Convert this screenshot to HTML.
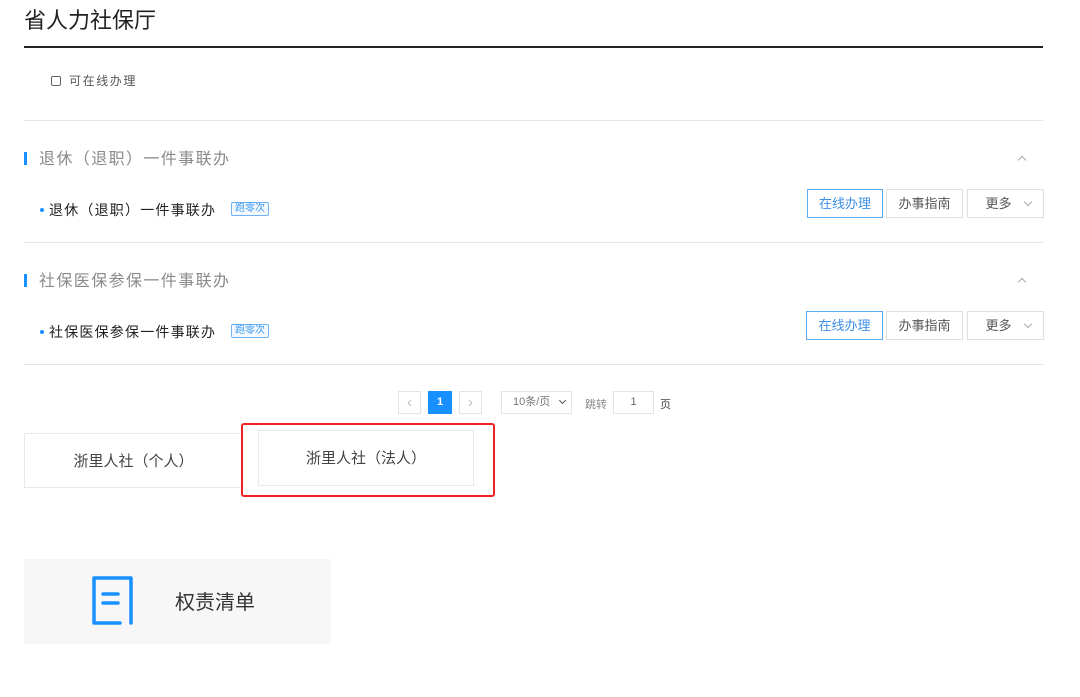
<!DOCTYPE html>
<html><head><meta charset="utf-8"><style>
*{margin:0;padding:0;box-sizing:border-box}
body{width:1080px;height:697px;background:#fff;position:relative;overflow:hidden;font-family:"Liberation Sans","Noto Sans CJK SC",sans-serif;color:#333}
.a{position:absolute;white-space:nowrap}
.hr{position:absolute;left:24px;width:1019px;height:1px;background:#e4e4e4}
.bar{position:absolute;left:24px;width:3px;height:13px;background:#1890ff}
.sh{font-size:16px;color:#8a8a8a;line-height:20px;letter-spacing:1.4px}
.it{font-size:14px;color:#222;line-height:20px;letter-spacing:1.2px}
.dot{position:absolute;width:4px;height:4px;border-radius:50%;background:#1890ff}
.tag{position:absolute;width:38px;height:14px;border:1px solid #6fb3f5;color:#3d9af0;font-size:10px;line-height:12px;text-align:center;border-radius:2px;background:#f4f9ff}
.btn{position:absolute;height:29px;border:1px solid #e0e0e0;font-size:13px;color:#555;line-height:28px;text-align:center}
.chev{position:absolute;width:6px;height:6px;border-left:1px solid #aaa;border-top:1px solid #aaa;transform:rotate(45deg)}
.pg{position:absolute;top:391px;height:23px;border:1px solid #e4e4e4;font-size:11px;color:#666;line-height:21px;text-align:center}
</style></head><body>
<div class="a" style="left:24px;top:6px;font-size:22px;line-height:30px;color:#222">省人力社保厅</div>
<div class="a" style="left:24px;top:46px;width:1019px;height:2px;background:#222"></div>
<div class="a" style="left:51px;top:76px;width:10px;height:10px;border:1px solid #666;border-radius:2px"></div>
<div class="a" style="left:69px;top:73px;font-size:12px;line-height:17px;color:#555;letter-spacing:1.6px">可在线办理</div>
<div class="hr" style="top:120px"></div>

<div class="bar" style="top:152px"></div>
<div class="a sh" style="left:39px;top:150px">退休（退职）一件事联办</div>
<div class="chev" style="left:1019px;top:157px"></div>
<div class="dot" style="left:40px;top:208px"></div>
<div class="a it" style="left:49px;top:200px">退休（退职）一件事联办</div>
<div class="tag" style="left:231px;top:202px">跑零次</div>
<div class="btn" style="left:807px;top:189px;width:76px;border-color:#5aaaf5;color:#3d8fe8">在线办理</div>
<div class="btn" style="left:886px;top:189px;width:77px">办事指南</div>
<div class="btn" style="left:967px;top:189px;width:77px;text-indent:-14px">更多</div>
<div class="chev" style="left:1025px;top:199px;transform:rotate(225deg)"></div>
<div class="hr" style="top:242px"></div>

<div class="bar" style="top:274px"></div>
<div class="a sh" style="left:39px;top:272px">社保医保参保一件事联办</div>
<div class="chev" style="left:1019px;top:279px"></div>
<div class="dot" style="left:40px;top:330px"></div>
<div class="a it" style="left:49px;top:322px">社保医保参保一件事联办</div>
<div class="tag" style="left:231px;top:324px">跑零次</div>
<div class="btn" style="left:806px;top:311px;width:77px;border-color:#5aaaf5;color:#3d8fe8">在线办理</div>
<div class="btn" style="left:886px;top:311px;width:77px">办事指南</div>
<div class="btn" style="left:967px;top:311px;width:77px;text-indent:-14px">更多</div>
<div class="chev" style="left:1025px;top:321px;transform:rotate(225deg)"></div>
<div class="hr" style="top:364px"></div>

<div class="pg" style="left:398px;width:23px;color:#bbb;font-size:15px">&lsaquo;</div>
<div class="pg" style="left:428px;width:24px;background:#1890ff;border-color:#1890ff;color:#fff;font-weight:bold">1</div>
<div class="pg" style="left:459px;width:23px;color:#bbb;font-size:15px">&rsaquo;</div>
<div class="pg" style="left:501px;width:71px;text-align:left;padding-left:11px;color:#777">10条/页</div>
<div class="chev" style="left:560px;top:398px;width:5px;height:5px;border-color:#555;transform:rotate(225deg)"></div>
<div class="a" style="left:585px;top:396px;font-size:11px;color:#888">跳转</div>
<div class="pg" style="left:613px;width:41px">1</div>
<div class="a" style="left:660px;top:396px;font-size:11px;color:#444">页</div>

<div class="a" style="left:24px;top:433px;width:219px;height:55px;border:1px solid #e8e8e8;font-size:15px;line-height:55px;text-align:center;color:#444">浙里人社（个人）</div>
<div class="a" style="left:258px;top:430px;width:216px;height:56px;border:1px solid #e8e8e8;font-size:15px;line-height:56px;text-align:center;color:#444">浙里人社（法人）</div>
<div class="a" style="left:241px;top:423px;width:254px;height:74px;border:2px solid #ee2222;border-radius:3px"></div>

<div class="a" style="left:24px;top:559px;width:307px;height:85px;background:#f7f7f7"></div>
<svg class="a" style="left:90px;top:575px" width="46" height="52" viewBox="0 0 46 52">
<path d="M4 3 H41 V48 M4 3 V48 H30" fill="none" stroke="#1890ff" stroke-width="3.5" stroke-linecap="round" stroke-linejoin="round"/>
<path d="M13 19 H28 M13 28 H28" stroke="#1890ff" stroke-width="3.5" stroke-linecap="round"/>
</svg>
<div class="a" style="left:175px;top:589px;font-size:20px;line-height:28px;color:#333">权责清单</div>
</body></html>
